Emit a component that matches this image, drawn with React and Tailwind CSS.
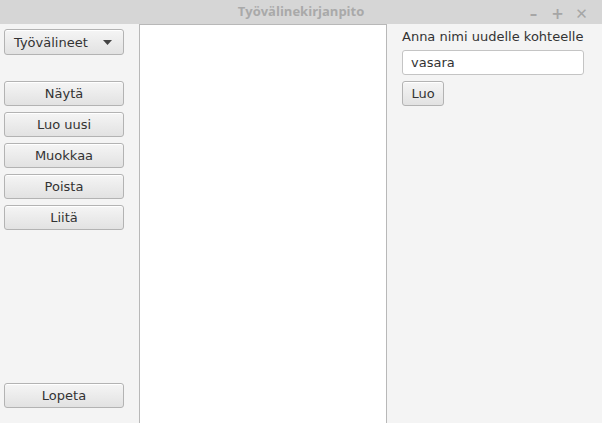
import { useState } from "react";

const font = { fontFamily: '"DejaVu Sans", sans-serif' };

const btn =
  "h-[25px] rounded-[3px] border border-[#b3b3b3] bg-gradient-to-b from-[#f5f5f5] to-[#e2e2e2] text-[13px] text-[#333] leading-none shadow-[inset_0_1px_0_#fff]";

const SideButton = ({ label }) => (
  <button className={`${btn} w-[120px]`}>{label}</button>
);

const App = () => {
  const [name, setName] = useState("vasara");

  return (
    <div
      className="w-[602px] h-[423px] flex flex-col bg-[#f4f4f4] overflow-hidden"
      style={font}
    >
      {/* Title bar */}
      <div className="relative h-[24px] bg-[#d6d6d6] flex items-center justify-center">
        <span
          className="text-[13px] font-bold text-[#a9a9a9]"
          style={{ fontFamily: '"Open Sans", sans-serif' }}
        >
          Työvälinekirjanpito
        </span>
        <div className="absolute right-[14px] top-[3px] flex items-center gap-[11px] text-[#a6a6a6] text-[15px] font-bold">
          <span className="w-[13px] text-center">–</span>
          <span className="w-[13px] text-center">+</span>
          <span className="w-[13px] text-center">✕</span>
        </div>
      </div>

      <div className="flex-1 flex">
        {/* Left menu */}
        <div className="w-[139px] flex flex-col items-start pl-[4px] pt-[5px] pb-[15px] gap-[6px]">
          <button
            className={`${btn} h-[26px] w-[120px] flex items-center justify-between pl-[9px] pr-[11px]`}
          >
            <span>Työvälineet</span>
            <svg width="9" height="5" viewBox="0 0 9 5">
              <path d="M0 0 L9 0 L4.5 5 Z" fill="#444" />
            </svg>
          </button>
          <div className="h-[14px]" />
          <SideButton label="Näytä" />
          <SideButton label="Luo uusi" />
          <SideButton label="Muokkaa" />
          <SideButton label="Poista" />
          <SideButton label="Liitä" />
          <div className="flex-1" />
          <SideButton label="Lopeta" />
        </div>

        {/* List */}
        <div className="w-[248px] bg-white border-l border-r border-t border-[#b8b8b8]" />

        {/* Right form */}
        <div className="flex-1 flex flex-col items-start pl-[15px] pt-[5px]">
          <span className="text-[13px] text-[#333] leading-[16px]">
            Anna nimi uudelle kohteelle
          </span>
          <input
            value={name}
            onChange={(e) => setName(e.target.value)}
            className="mt-[5px] w-[182px] h-[25px] px-[8px] rounded-[3px] border border-[#c4c4c4] bg-white text-[13px] text-[#333] outline-none"
          />
          <button className={`${btn} mt-[6px] w-[42px]`}>Luo</button>
        </div>
      </div>
    </div>
  );
};

export default App;
